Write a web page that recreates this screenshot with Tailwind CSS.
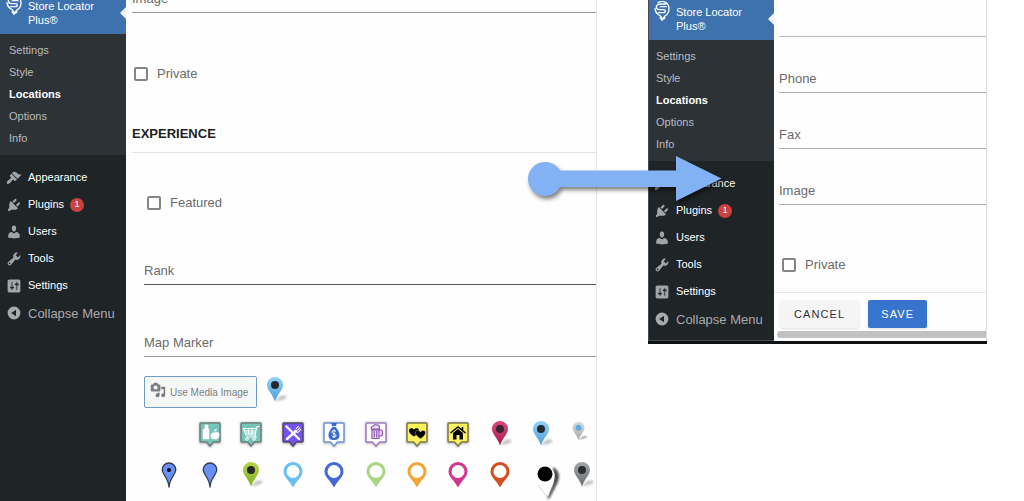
<!DOCTYPE html>
<html lang="en">

<head>
    <meta charset="UTF-8">
    <meta name="viewport" content="width=device-width, initial-scale=1.0">
    <title>Store Locator Plus - Locations</title>
    <script src="https://cdn.jsdelivr.net/npm/@tailwindcss/browser@4"></script>
</head>

<body class="bg-white font-['Liberation_Sans',Arial,sans-serif] text-[13px] text-[#6b6b6b]">

    <!-- Shared icons -->
    <svg width="0" height="0" class="absolute" aria-hidden="true">
        <defs>
            <linearGradient id="gBlue" x1="0" y1="0" x2="0" y2="1">
                <stop offset="0" stop-color="#8fd2f5" />
                <stop offset="1" stop-color="#4f9fdc" />
            </linearGradient>
            <linearGradient id="gGreen" x1="0" y1="0" x2="0" y2="1">
                <stop offset="0" stop-color="#b4d84a" />
                <stop offset="1" stop-color="#7fae1c" />
            </linearGradient>
            <linearGradient id="gPink" x1="0" y1="0" x2="0" y2="1">
                <stop offset="0" stop-color="#e0447f" />
                <stop offset="1" stop-color="#a81c52" />
            </linearGradient>
            <linearGradient id="gGray" x1="0" y1="0" x2="0" y2="1">
                <stop offset="0" stop-color="#a3a7aa" />
                <stop offset="1" stop-color="#6c7074" />
            </linearGradient>
            <linearGradient id="gSilver" x1="0" y1="0" x2="0" y2="1">
                <stop offset="0" stop-color="#dcdcdc" />
                <stop offset="1" stop-color="#a9a9a9" />
            </linearGradient>
            <filter id="soft" x="-50%" y="-50%" width="200%" height="200%">
                <feGaussianBlur stdDeviation="1" />
            </filter>

            <symbol id="logo" viewBox="0 0 48 60">
                <path d="M38 9H21C12 9 7 13 7 18s4 8 10 8h11c4 0 6 2 6 4s-2 5-6 5H12" fill="none" stroke="currentColor" stroke-width="4" />
                <path d="M38 17H22c-3 0-4 1-4 2M3 22c0 8 3 14 9 18 6 3 11 5 12 15l9-10c7-4 12-12 12-21C45 14 41 8 36 5 28 0 17 1 11 6" fill="none" stroke="currentColor" stroke-width="4" />
                <path d="M17 49l7 8 10-7" fill="none" stroke="currentColor" stroke-width="4" />
            </symbol>
            <symbol id="appearance" viewBox="0 0 20 20">
                <path d="M14.48 11.06L7.41 3.99l1.5-1.5c.5-.56 2.3-.47 3.51.32 1.21.8 1.43 1.28 2.91 2.1 1.18.64 2.45 1.26 4.45.85zm-.71.71L6.7 4.7 4.93 6.47c-.39.39-.39 1.02 0 1.41l1.06 1.06c.39.39.39 1.03 0 1.42-.6.6-1.43 1.11-2.21 1.69-.35.26-.7.53-1.01.84C1.43 14.23.4 16.08 1.4 17.07c.99 1 2.84-.03 4.18-1.36.31-.31.58-.66.85-1.02.57-.78 1.08-1.61 1.69-2.21.39-.39 1.02-.39 1.41 0l1.06 1.06c.39.39 1.02.39 1.41 0z" fill="currentColor" />
            </symbol>
            <symbol id="plugins" viewBox="0 0 20 20">
                <path d="M13.11 4.36L9.87 7.6 8 5.73l3.24-3.24c.35-.34 1.05-.2 1.56.32.52.51.66 1.21.31 1.55zm-8 1.77l.91-1.12 9.01 9.01-1.19.84c-.71.71-2.63 1.16-3.82 1.16H6.14L4.9 17.26c-.59.59-1.54.59-2.12 0-.59-.58-.59-1.53 0-2.12l1.24-1.24v-3.88c0-1.13.4-3.19 1.09-3.89zm7.26 3.97l3.24-3.24c.34-.35 1.04-.21 1.55.31.52.51.66 1.21.31 1.55l-3.24 3.25z" fill="currentColor" />
            </symbol>
            <symbol id="users" viewBox="0 0 20 20">
                <path d="M10 9.25c-2.27 0-2.73-3.44-2.73-3.44C7 4.02 7.82 2 9.97 2c2.16 0 2.98 2.02 2.71 3.81 0 0-.41 3.44-2.68 3.44zm0 2.57L12.72 10c2.39 0 4.52 2.33 4.52 4.53v2.49s-3.65 1.13-7.24 1.13c-3.65 0-7.24-1.13-7.24-1.13v-2.49c0-2.25 1.94-4.48 4.47-4.48z" fill="currentColor" />
            </symbol>
            <symbol id="tools" viewBox="0 0 20 20">
                <path d="M16.68 9.77c-1.34 1.34-3.3 1.67-4.95.99l-5.41 6.52c-.99.99-2.59.99-3.58 0s-.99-2.59 0-3.57l6.52-5.42c-.68-1.65-.35-3.61.99-4.95 1.28-1.28 3.12-1.62 4.72-1.06l-2.89 2.89 2.82 2.82 2.86-2.87c.53 1.58.18 3.39-1.08 4.65zM3.81 16.21c.4.39 1.04.39 1.43 0 .4-.4.4-1.04 0-1.43-.39-.4-1.03-.4-1.43 0-.39.39-.39 1.03 0 1.43z" fill="currentColor" />
            </symbol>
            <symbol id="settings" viewBox="0 0 20 20">
                <path d="M18 16V4c0-1.1-.9-2-2-2H4c-1.1 0-2 .9-2 2v12c0 1.1.9 2 2 2h12c1.1 0 2-.9 2-2zM8 11h1c.55 0 1 .45 1 1s-.45 1-1 1H8v1.5c0 .28-.22.5-.5.5s-.5-.22-.5-.5V13H6c-.55 0-1-.45-1-1s.45-1 1-1h1V5.5c0-.28.22-.5.5-.5s.5.22.5.5V11zm5-2h-1c-.55 0-1-.45-1-1s.45-1 1-1h1V5.500c0-.28.22-.5.5-.5s.5.22.5.5V7h1c.55 0 1 .45 1 1s-.45 1-1 1h-1v5.500c0 .28-.22.5-.5.5s-.5-.22-.5-.5V9z" fill="currentColor" />
            </symbol>
            <symbol id="collapse" viewBox="0 0 20 20">
                <path fill-rule="evenodd" d="M10 2a8 8 0 1 1 0 16 8 8 0 0 1 0-16zm2.500 4L6.500 10l6 4z" fill="currentColor" />
            </symbol>
            <symbol id="media" viewBox="0 0 20 20">
                <path d="M13 11V4c0-.55-.45-1-1-1h-1.67L9 1H5L3.670 3H2c-.55 0-1 .45-1 1v7c0 .55.45 1 1 1h10c.55 0 1-.45 1-1zM7 4.500c1.380 0 2.500 1.120 2.500 2.500S8.380 9.500 7 9.500 4.500 8.380 4.500 7 5.620 4.500 7 4.500zM14 6h5v10.500c0 1.380-1.120 2.500-2.500 2.500S14 17.880 14 16.500s1.120-2.500 2.500-2.500c.17 0 .34.02.5.05V9h-3V6zm-4 8.050V13h2v3.500c0 1.380-1.120 2.500-2.500 2.500S7 17.880 7 16.500 8.120 14 9.500 14c.17 0 .34.02.5.05z" fill="currentColor" />
            </symbol>

            <!-- Marker shapes -->
            <symbol id="pin" viewBox="-1 0 28 28">
                <path d="M13 25l5-5c4-2 8 0 6 2s-7 3-11 3z" fill="#000" opacity=".22" filter="url(#soft)" />
                <path d="M13 1a8 8 0 0 1 8 8c0 5-5 8-8 16.500C10 17 5 14 5 9a8 8 0 0 1 8-8z" />
            </symbol>
            <symbol id="ring" viewBox="0 0 20 26">
                <path fill-rule="evenodd" d="M10 0a9.500 9.500 0 0 1 9.500 9.500C19.500 15 14 18 10 25.500 6 18 .5 15 .5 9.500A9.500 9.500 0 0 1 10 0zm0 3a6.500 6.500 0 1 0 0 13 6.500 6.500 0 0 0 0-13z" fill="currentColor" />
            </symbol>
            <symbol id="balloon" viewBox="0 0 16 26">
                <path d="M8 1a6.800 6.800 0 0 1 6.800 6.800C14.800 13 8.400 15 8 25.500 7.600 15 1.200 13 1.200 7.800A6.800 6.800 0 0 1 8 1z" fill="#6991f5" stroke="#333a4d" stroke-width="1.300" />
            </symbol>
            <symbol id="sign" viewBox="0 0 28 30">
                <path d="M4 2h20q1 0 1 1v20q0 1-1 1h-6l-4 4-4-4H4q-1 0-1-1V3q0-1 1-1z" fill="#000" opacity=".25" filter="url(#soft)" />
            </symbol>
            <symbol id="signShape" viewBox="0 0 28 30">
                <path d="M5 3h18q1 0 1 1v17q0 1-1 1h-5.500L14 26l-3.500-4H5q-1 0-1-1V4q0-1 1-1z" />
            </symbol>
        </defs>
    </svg>

    <main class="relative grid grid-cols-[597fr_339fr] items-start gap-x-[51px] pr-[37px]">

        <!-- Long form panel -->
        <section class="flex h-screen overflow-hidden border-r border-[#e6e6e6] bg-[#fefefe]">
            <nav class="-mt-1.5 flex w-[126px] shrink-0 flex-col bg-[#1f2427] text-white">
                <a href="#" class="relative flex items-start gap-1.5 bg-[#3d72af] pt-[5px] pb-[7px] pl-1.5 text-[11px] leading-[14px]">
                    <svg class="-mt-1 h-5 w-4 shrink-0"><use href="#logo" /></svg>
                    <span>Store Locator<br>Plus®</span>
                    <span class="absolute top-[13px] right-0 border-y-[6px] border-r-[6px] border-y-transparent border-r-[#f0f0f1]"></span>
                </a>
                <ul class="bg-[#2d3236] pt-[5px] pb-1.5 pl-[9px] text-[11px] leading-[22px] text-[#b9bcbf]">
                    <li><a href="#">Settings</a></li>
                    <li><a href="#">Style</a></li>
                    <li><a href="#" class="font-bold text-white">Locations</a></li>
                    <li><a href="#">Options</a></li>
                    <li><a href="#">Info</a></li>
                </ul>
                <ul class="pt-[9px] pl-1.5 text-[11px] leading-[27px]">
                    <li><a href="#" class="flex items-center gap-1.5"><svg class="size-4 text-[#a0a5aa]"><use href="#appearance" /></svg>Appearance</a></li>
                    <li><a href="#" class="flex items-center gap-1.5"><svg class="size-4 text-[#a0a5aa]"><use href="#plugins" /></svg>Plugins
                            <span class="flex size-3.5 items-center justify-center rounded-full bg-[#c9423f] text-[9px] leading-none">1</span></a></li>
                    <li><a href="#" class="flex items-center gap-1.5"><svg class="size-4 text-[#a0a5aa]"><use href="#users" /></svg>Users</a></li>
                    <li><a href="#" class="flex items-center gap-1.5"><svg class="size-4 text-[#a0a5aa]"><use href="#tools" /></svg>Tools</a></li>
                    <li><a href="#" class="flex items-center gap-1.5"><svg class="size-4 text-[#a0a5aa]"><use href="#settings" /></svg>Settings</a></li>
                </ul>
                <button type="button" class="flex h-[30px] items-center gap-1.5 pl-1.5 text-[13px] text-[#a7aaad]"><svg class="mb-0.5 size-4 shrink-0"><use href="#collapse" /></svg>Collapse Menu</button>
            </nav>

            <form class="min-w-0 flex-1 pl-1.5">
                <div class="-mt-[14px] flex h-[27px] items-center border-b border-[#999]">
                    <label for="image">Image</label>
                    <input id="image" type="text" class="min-w-0 flex-1 outline-none">
                </div>
                <div class="mt-[51px] flex h-5 items-center gap-[9px] pl-0.5">
                    <input id="private" type="checkbox" class="size-3.5 appearance-none rounded-xs border-2 border-[#858585]">
                    <label for="private">Private</label>
                </div>

                <h2 class="mt-10 border-b border-[#e3e3e3] pb-2 leading-5 font-bold text-[#222]">EXPERIENCE</h2>

                <div class="pl-3">
                    <div class="mt-10 flex h-5 items-center gap-[9px] pl-[3px]">
                        <input id="featured" type="checkbox" class="size-3.5 appearance-none rounded-xs border-2 border-[#858585]">
                        <label for="featured">Featured</label>
                    </div>
                    <div class="mt-[45px] flex h-[27px] items-center border-b border-[#555]">
                        <label for="rank">Rank</label>
                        <input id="rank" type="text" class="min-w-0 flex-1 outline-none">
                    </div>
                    <div class="mt-[45px] flex h-[27px] items-center border-b border-[#999]">
                        <label for="marker">Map Marker</label>
                        <input id="marker" type="text" class="min-w-0 flex-1 outline-none">
                    </div>

                    <div class="mt-[19px] flex h-8 items-center gap-1">
                        <button type="button" class="flex h-8 items-center gap-1 rounded-xs border border-[#6d9acb] bg-[#f6f7f7] pr-2 pl-[5px] text-[10px] whitespace-nowrap text-[#7c7f82]">
                            <svg class="mb-1 size-4 shrink-0"><use href="#media" /></svg>Use Media Image
                        </button>
                        <svg class="mb-1 size-7" viewBox="-1 0 28 28" fill="url(#gBlue)">
                            <use href="#pin" x="-1" width="28" height="28" />
                            <circle cx="13" cy="9" r="4" fill="#26292b" />
                        </svg>
                    </div>

                    <!-- Marker picker -->
                    <div class="mt-[7px] grid auto-rows-[40px] grid-cols-[repeat(10,minmax(0,41fr))_minmax(0,34fr)] place-items-center pl-1">
                        <button type="button" aria-label="Grocery" class="col-start-2">
                            <svg class="h-[30px] w-7" viewBox="0 0 28 30">
                                <use href="#sign" />
                                <use href="#signShape" fill="#75c5bb" stroke="#6d7d7d" stroke-width="1.500" />
                                <path d="M9 5h3v3l1 2v9H7v-9l2-2zM19 13c3-2 5 0 4 3-1 4-3 3-4 3s-4 1-4-3c0-3 2-4 4-3zM18.500 12q0-3 2.500-3" fill="#fff" stroke="#fff" stroke-width=".6" />
                            </svg>
                        </button>
                        <button type="button" aria-label="Shopping">
                            <svg class="h-[30px] w-7" viewBox="0 0 28 30">
                                <use href="#sign" />
                                <use href="#signShape" fill="#75c5bb" stroke="#6d7d7d" stroke-width="1.500" />
                                <path d="M22.500 6.500H20L18 15H9L6.500 8.500H19M8 11h11M9 13h9.500M11 8.500l1 6M15 8.500V15M18 15l1 2H9" fill="none" stroke="#fff" stroke-width="1.100" />
                                <circle cx="10" cy="19" r="1.300" fill="none" stroke="#fff" />
                                <circle cx="17" cy="19" r="1.300" fill="none" stroke="#fff" />
                            </svg>
                        </button>
                        <button type="button" aria-label="Restaurant">
                            <svg class="h-[30px] w-7" viewBox="0 0 28 30">
                                <use href="#sign" />
                                <use href="#signShape" fill="#7452ee" stroke="#4e4a66" stroke-width="1.500" />
                                <path d="M7.500 6.500L20 19M8 19l9-8" fill="none" stroke="#fff" stroke-width="2.400" stroke-linecap="round" />
                                <path d="M15.500 10q1 3 4 2l2.500-3M17 9l2.500-3M18.500 10.500L21 7.500" fill="none" stroke="#fff" stroke-width="1.100" />
                            </svg>
                        </button>
                        <button type="button" aria-label="Bank">
                            <svg class="h-[30px] w-7" viewBox="0 0 28 30">
                                <use href="#sign" />
                                <use href="#signShape" fill="#fff" stroke="#6e95d4" stroke-width="1.500" />
                                <path d="M11 3h6l-1.500 4c2 2 4 5 4 8 0 4-2 5-5.500 5s-5.500-1-5.500-5c0-3 2-6 4-8z" fill="#3c6ccc" />
                                <path d="M11.500 6.500h5" stroke="#fff" stroke-width=".8" />
                                <path d="M16 11.500q-1-1.200-2.500-1-2 .5-1.500 2 .5 1 2 1.200 2 .4 2 1.800-.3 1.500-2 1.500-1.600 0-2.300-1.200M14 9.500v8.500" fill="none" stroke="#fff" stroke-width="1" />
                            </svg>
                        </button>
                        <button type="button" aria-label="Bar">
                            <svg class="h-[30px] w-7" viewBox="0 0 28 30">
                                <use href="#sign" />
                                <use href="#signShape" fill="#fff" stroke="#a07cc0" stroke-width="1.500" />
                                <path d="M9.500 9q-1-3 2-3 1-2 3-1 3-.5 3 3v1zM10 10h7v8.500h-7zM17.500 10H19q1.500 0 1.500 1.500v3Q20.500 16 17.500 16M12.300 11v6.500M14.700 11v6.500" fill="#eadcf5" stroke="#8f57b5" stroke-width="1.200" />
                            </svg>
                        </button>
                        <button type="button" aria-label="Hearts">
                            <svg class="h-[30px] w-7" viewBox="0 0 28 30">
                                <use href="#sign" />
                                <use href="#signShape" fill="#fbf25c" stroke="#77774a" stroke-width="1.500" />
                                <path d="M11 16.500C7 14 5.500 12 6 10c.7-2 3.500-2.500 5-.2 1.500-2.300 4.500-1.800 5 .2.300 2.500-2 4.500-5 6.500z" fill="#000" />
                                <path d="M17.500 18.700c-4-2.500-5.500-4.500-5-6.500.7-2 3.500-2.500 5-.2 1.500-2.300 4.500-1.800 5 .2.300 2.500-2 4.500-5 6.500z" fill="#000" stroke="#fbf25c" stroke-width=".4" />
                            </svg>
                        </button>
                        <button type="button" aria-label="Home">
                            <svg class="h-[30px] w-7" viewBox="0 0 28 30">
                                <use href="#sign" />
                                <use href="#signShape" fill="#fbf25c" stroke="#77774a" stroke-width="1.500" />
                                <path d="M6.500 13L14 7l7.500 6M18.500 7v3" fill="none" stroke="#000" stroke-width="1.500" />
                                <path d="M9 13l5-4 5 4v6.500h-3.500V15h-3v4.500H9z" fill="#000" />
                            </svg>
                        </button>
                        <button type="button" aria-label="Pink pin">
                            <svg class="mb-0.5 size-7" viewBox="-1 0 28 28" fill="url(#gPink)">
                                <use href="#pin" x="-1" width="28" height="28" />
                                <circle cx="13" cy="9" r="4" fill="#33282d" />
                            </svg>
                        </button>
                        <button type="button" aria-label="Blue pin">
                            <svg class="mb-0.5 size-7" viewBox="-1 0 28 28" fill="url(#gBlue)">
                                <use href="#pin" x="-1" width="28" height="28" />
                                <circle cx="13" cy="9" r="4" fill="#26292b" />
                            </svg>
                        </button>
                        <button type="button" aria-label="Small silver pin">
                            <svg class="mb-2 size-[21px]" viewBox="-1 0 28 28" fill="url(#gSilver)">
                                <use href="#pin" x="-1" width="28" height="28" />
                                <circle cx="13" cy="9" r="4" fill="#5eabe6" />
                            </svg>
                        </button>

                        <button type="button" aria-label="Blue balloon with dot">
                            <svg class="h-[26px] w-4" viewBox="0 0 16 26">
                                <use href="#balloon" />
                                <circle cx="8" cy="8" r="2" fill="#000" />
                            </svg>
                        </button>
                        <button type="button" aria-label="Blue balloon"><svg class="h-[26px] w-4"><use href="#balloon" /></svg></button>
                        <button type="button" aria-label="Green pin">
                            <svg class="size-7" viewBox="-1 0 28 28" fill="url(#gGreen)">
                                <use href="#pin" x="-1" width="28" height="28" />
                                <circle cx="13" cy="9" r="4" fill="#26292b" />
                            </svg>
                        </button>
                        <button type="button" aria-label="Light blue ring" class="text-[#67bff5]"><svg class="h-[26px] w-5"><use href="#ring" /></svg></button>
                        <button type="button" aria-label="Blue ring" class="text-[#4468d6]"><svg class="h-[26px] w-5"><use href="#ring" /></svg></button>
                        <button type="button" aria-label="Green ring" class="text-[#aad583]"><svg class="h-[26px] w-5"><use href="#ring" /></svg></button>
                        <button type="button" aria-label="Orange ring" class="text-[#f3a536]"><svg class="h-[26px] w-5"><use href="#ring" /></svg></button>
                        <button type="button" aria-label="Pink ring" class="text-[#d5368d]"><svg class="h-[26px] w-5"><use href="#ring" /></svg></button>
                        <button type="button" aria-label="Red ring" class="text-[#d34e22]"><svg class="h-[26px] w-5"><use href="#ring" /></svg></button>
                        <button type="button" aria-label="White pin" class="pt-4 pl-4">
                            <svg class="h-9 w-7" viewBox="0 0 28 36">
                                <path d="M18 2c8 4 7 12 3 19l-7 13-2-1 6-14z" fill="#000" opacity=".7" filter="url(#soft)" />
                                <path d="M2 9a9 9 0 0 1 17.500-1c1.500 8-4 14-6.500 24C11 24 3 20 2 9z" fill="#fefefe" />
                                <path d="M3 20l10 13" stroke="#ccc" stroke-width=".8" />
                                <circle cx="10" cy="9" r="7.500" fill="#000" />
                            </svg>
                        </button>
                        <button type="button" aria-label="Gray pin" class="pl-1.5">
                            <svg class="size-7" viewBox="-1 0 28 28" fill="url(#gGray)">
                                <use href="#pin" x="-1" width="28" height="28" />
                                <circle cx="13" cy="9" r="4" fill="#2b2d2f" />
                            </svg>
                        </button>
                    </div>
                </div>
            </form>
        </section>

        <!-- Short form panel -->
        <section class="overflow-hidden border-b-[3px] border-[#101113] bg-[#fefefe]">
            <div class="flex">
                <nav class="flex w-[126px] shrink-0 flex-col border-b border-l border-[#44494d] bg-[#1f2427] text-white">
                    <a href="#" class="relative flex items-start gap-1.5 bg-[#3d72af] pt-[5px] pb-[7px] pl-[5px] text-[11px] leading-[14px]">
                        <svg class="-mt-1 h-5 w-4 shrink-0"><use href="#logo" /></svg>
                        <span>Store Locator<br>Plus®</span>
                        <span class="absolute top-[13px] right-0 border-y-[6px] border-r-[6px] border-y-transparent border-r-[#f0f0f1]"></span>
                    </a>
                    <ul class="bg-[#2d3236] pt-[5px] pb-1.5 pl-[7px] text-[11px] leading-[22px] text-[#b9bcbf]">
                        <li><a href="#">Settings</a></li>
                        <li><a href="#">Style</a></li>
                        <li><a href="#" class="font-bold text-white">Locations</a></li>
                        <li><a href="#">Options</a></li>
                        <li><a href="#">Info</a></li>
                    </ul>
                    <ul class="pt-[9px] pl-[5px] text-[11px] leading-[27px]">
                        <li><a href="#" class="flex items-center gap-1.5"><svg class="size-4 text-[#a0a5aa]"><use href="#appearance" /></svg>Appearance</a></li>
                        <li><a href="#" class="flex items-center gap-1.5"><svg class="size-4 text-[#a0a5aa]"><use href="#plugins" /></svg>Plugins
                                <span class="flex size-3.5 items-center justify-center rounded-full bg-[#c9423f] text-[9px] leading-none">1</span></a></li>
                        <li><a href="#" class="flex items-center gap-1.5"><svg class="size-4 text-[#a0a5aa]"><use href="#users" /></svg>Users</a></li>
                        <li><a href="#" class="flex items-center gap-1.5"><svg class="size-4 text-[#a0a5aa]"><use href="#tools" /></svg>Tools</a></li>
                        <li><a href="#" class="flex items-center gap-1.5"><svg class="size-4 text-[#a0a5aa]"><use href="#settings" /></svg>Settings</a></li>
                    </ul>
                    <button type="button" class="flex h-[30px] items-center gap-1.5 pl-[5px] text-[13px] text-[#a7aaad]"><svg class="mb-0.5 size-4 shrink-0"><use href="#collapse" /></svg>Collapse Menu</button>
                </nav>

                <form class="min-w-0 flex-1 border-r border-[#e0e0e0]">
                    <div class="flex flex-col gap-[29px] pt-2.5 pl-[5px]">
                        <div class="flex h-[27px] items-center border-b border-[#bbb]">
                            <input type="text" aria-label="Email" class="min-w-0 flex-1 outline-none">
                        </div>
                        <div class="flex h-[27px] items-center border-b border-[#aaa]">
                            <label for="phone">Phone</label>
                            <input id="phone" type="text" class="min-w-0 flex-1 outline-none">
                        </div>
                        <div class="flex h-[27px] items-center border-b border-[#aaa]">
                            <label for="fax">Fax</label>
                            <input id="fax" type="text" class="min-w-0 flex-1 outline-none">
                        </div>
                        <div class="flex h-[27px] items-center border-b border-[#aaa]">
                            <label for="image2">Image</label>
                            <input id="image2" type="text" class="min-w-0 flex-1 outline-none">
                        </div>
                    </div>
                    <div class="mt-[50px] flex h-5 items-center gap-[9px] pl-2">
                        <input id="private2" type="checkbox" class="size-3.5 appearance-none rounded-xs border-2 border-[#858585]">
                        <label for="private2">Private</label>
                    </div>
                    <div class="mt-[17px] flex gap-[9px] border-t border-[#e8e8e8] pt-[7px] pb-[3px] pl-1.5">
                        <button type="button" class="h-7 rounded-xs bg-[#f5f5f5] px-3.5 text-[11px] tracking-widest text-[#333] shadow-sm">CANCEL</button>
                        <button type="submit" class="h-7 rounded-xs bg-[#3674cd] px-[13px] text-[11px] tracking-widest text-white shadow-sm">SAVE</button>
                    </div>
                    <div class="mb-[3px] ml-[3px] h-[7px] rounded-l-full bg-[#c1c1c1]"></div>
                </form>
            </div>
        </section>

        <!-- Arrow linking the two panels -->
        <svg class="absolute top-[150px] left-[520px] h-[60px] w-[210px] drop-shadow-[2px_3px_2px_rgba(0,0,0,0.5)]" viewBox="0 0 210 60" aria-hidden="true">
            <circle cx="25" cy="29" r="17" fill="#82b2f4" />
            <path d="M30 20.500H156V6l45.500 22.500L156 51V37H30z" fill="#82b2f4" />
        </svg>
    </main>

</body>

</html>
